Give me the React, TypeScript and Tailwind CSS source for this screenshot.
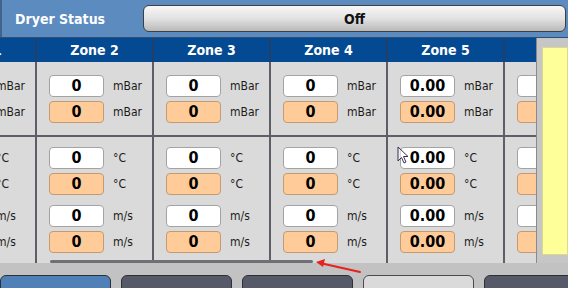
import React from "react";

const zones = [
  { name: "Zone 1", v: "0" },
  { name: "Zone 2", v: "0" },
  { name: "Zone 3", v: "0" },
  { name: "Zone 4", v: "0" },
  { name: "Zone 5", v: "0.00" },
  { name: "Zone 6", v: "0" },
];

function Field({ v, unit, orange }: { v: string; unit: string; orange?: boolean }) {
  return (
    <div className="flex items-center h-[22px]">
      <div
        className={
          orange
            ? "w-[55px] h-[22px] rounded-[4px] border border-[#c49a72] bg-[#ffcc99] flex items-center justify-center text-[16px] font-bold text-black leading-none"
            : "w-[55px] h-[22px] rounded-[4px] border border-[#a3a3a3] bg-white flex items-center justify-center text-[16px] font-bold text-black leading-none"
        }
      >
        {v}
      </div>
      <div className="ml-[9px] text-[12px] text-[#1a1a1a] leading-none">{unit}</div>
    </div>
  );
}

export default function App() {
  return (
    <div className="relative w-[568px] h-[288px] overflow-hidden bg-[#c2c2c2] font-['DejaVu_Sans_Condensed','DejaVu_Sans',sans-serif]">
      {/* Top bar */}
      <div className="h-[38px] bg-[#5b8bbf] border-b border-[#2f4f75] flex items-start">
        <div className="w-[143px] h-[37px] flex items-center pl-[13px] border-l-[2px] border-[#40638d]">
          <span className="text-white font-bold text-[14px] leading-none">Dryer Status</span>
        </div>
        <div className="flex-1 mt-[5px] mr-[2px] h-[27px] rounded-[6px] border border-[#3f3f3f] bg-gradient-to-b from-[#f7f7f7] via-[#e2e2e2] to-[#b9b9b9] flex items-center justify-center">
          <span className="font-bold text-[14px] text-[#111] leading-none">Off</span>
        </div>
      </div>

      {/* Main */}
      <div className="flex h-[225px]">
        <div className="w-[536px] overflow-hidden">
          <div className="flex -ml-[80px] h-full">
            {zones.map((z) => (
              <div key={z.name} className="w-[117px] shrink-0 flex flex-col">
                <div className="h-[24px] bg-[#044a92] border-r-[2px] border-[#243f66] flex items-center justify-center">
                  <span className="text-white font-bold text-[14px] leading-none">{z.name}</span>
                </div>
                <div className="h-[75px] bg-[#dadada] border-r-[2px] border-b-[2px] border-[#5e5e66] pl-[12px] pt-[13px] flex flex-col gap-[4px]">
                  <Field v={z.v} unit="mBar" />
                  <Field v={z.v} unit="mBar" orange />
                </div>
                <div className="flex-1 bg-[#dadada] border-r-[2px] border-[#5e5e66] pl-[12px] pt-[10px] flex flex-col">
                  <div className="flex flex-col gap-[4px]">
                    <Field v={z.v} unit="°C" />
                    <Field v={z.v} unit="°C" orange />
                  </div>
                  <div className="flex flex-col gap-[4px] mt-[10px]">
                    <Field v={z.v} unit="m/s" />
                    <Field v={z.v} unit="m/s" orange />
                  </div>
                </div>
              </div>
            ))}
          </div>
        </div>
        <div className="flex-1 bg-[#c6c6c6] border-l border-[#8a8a8a] pl-[5px] pt-[9px] pb-[8px]">
          <div className="h-full bg-[#ffff99] border border-[#d8d890]" />
        </div>
      </div>

      {/* Bottom buttons */}
      <div className="flex gap-[10px] pt-[12px] bg-[#c2c2c2]">
        <div className="w-[111px] shrink-0 h-[20px] rounded-t-[6px] border border-[#2e2e36] bg-[#4f80b7]" />
        <div className="w-[111px] shrink-0 h-[20px] rounded-t-[6px] border border-[#2e2e36] bg-[#565a68]" />
        <div className="w-[111px] shrink-0 h-[20px] rounded-t-[6px] border border-[#2e2e36] bg-[#565a68]" />
        <div className="w-[111px] shrink-0 h-[20px] rounded-t-[6px] border border-[#4a4a4a] bg-[#dadada]" />
        <div className="w-[111px] shrink-0 h-[20px] rounded-t-[6px] border border-[#2e2e36] bg-[#565a68]" />
      </div>

      {/* Scrollbar */}
      <div className="absolute left-[50px] top-[260px] w-[263px] h-[3px] rounded-full bg-[#6f6f75]" />

      {/* Red arrow */}
      <svg className="absolute left-[312px] top-[255px]" width="52" height="22" viewBox="0 0 52 22">
        <line x1="48" y1="17" x2="8" y2="8" stroke="#e8211c" strokeWidth="2" strokeLinecap="round" />
        <polygon points="4,7 13,4 11,12" fill="#e8211c" />
      </svg>

      {/* Mouse cursor */}
      <svg className="absolute left-[397px] top-[146px]" width="14" height="20" viewBox="0 0 14 20">
        <path d="M1 1 L1 15 L4.5 11.5 L7 17 L9 16 L6.5 10.5 L11 10.5 Z" fill="rgba(255,255,255,0.6)" stroke="#3b2f5a" strokeWidth="1" strokeLinejoin="round" />
      </svg>
    </div>
  );
}
